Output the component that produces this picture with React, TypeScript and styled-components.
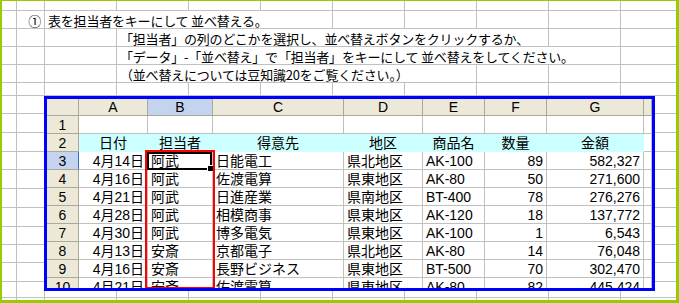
import React from "react";
import styled, { createGlobalStyle } from "styled-components";

const GRID = "#c0c0c0";
const GREEN = "#99cc00";
const HEAD_BG = "#ece9d8";
const HEAD_LINE = "#aca899";
const SEL_BG = "#c5d4ee";

const GlobalStyle = createGlobalStyle`
  html, body { margin: 0; padding: 0; background: #ffffff; }
  body { width: 679px; height: 303px; overflow: hidden; }
`;

const Sheet = styled.div`
  position: relative;
  width: 679px;
  height: 303px;
  box-sizing: border-box;
  border-left: 2px solid ${GREEN};
  border-top: 1px solid ${GREEN};
  border-right: 3px solid ${GREEN};
  border-bottom: 3px solid ${GREEN};
  display: grid;
  grid-template-columns: 15px 28px repeat(8, 72px) 55px;
  grid-template-rows: 10px 18px 18px 18px 18px 13px 18px 19px 19px 18px 19px 19px 19px 18px 18px 19px 16px 2px;
  overflow: hidden;
  background: #fff;
  font-family: "Noto Sans CJK JP", sans-serif;
`;

const SheetCell = styled.div<{ $span: number; $align: string; $lastCol: boolean; $lastRow: boolean }>`
  grid-column: span ${(p) => p.$span};
  box-sizing: border-box;
  border-right: ${(p) => (p.$lastCol ? "none" : `1px solid ${GRID}`)};
  border-bottom: ${(p) => (p.$lastRow ? "none" : `1px solid ${GRID}`)};
  font-size: 13px;
  letter-spacing: -0.2px;
  line-height: 17px;
  white-space: nowrap;
  text-align: ${(p) => p.$align};
  padding: 1px 3px 0 3px;
  color: #000;
  overflow: hidden;
`;

/* the pasted Excel screenshot floats over the sheet grid */
const Picture = styled.div`
  position: absolute;
  left: 42px;
  top: 95px;
  width: 611px;
  height: 195px;
  box-sizing: border-box;
  border: 3px solid #0000ff;
  overflow: hidden;
  display: grid;
  grid-template-columns: 32px 69px 65px 131px 79px 62px 62px 97px 1fr;
  grid-template-rows: 17px repeat(10, 18px);
  background: #fff;
  font-family: "Liberation Sans", "Noto Sans CJK JP", sans-serif;
`;

const ColHead = styled.div<{ $sel: boolean }>`
  box-sizing: border-box;
  background: ${(p) => (p.$sel ? SEL_BG : HEAD_BG)};
  border-right: 1px solid ${HEAD_LINE};
  border-bottom: 1px solid ${HEAD_LINE};
  font-size: 14px;
  line-height: 16px;
  text-align: center;
  color: #000;
`;

const RowHead = styled.div<{ $sel: boolean }>`
  box-sizing: border-box;
  background: ${(p) => (p.$sel ? SEL_BG : HEAD_BG)};
  border-right: 1px solid ${(p) => (p.$sel ? "#316ac5" : HEAD_LINE)};
  border-bottom: 1px solid ${HEAD_LINE};
  font-size: 14px;
  line-height: 17px;
  padding-top: 1px;
  text-align: center;
  color: #000;
`;

const Cell = styled.div<{ $align: string; $fill: boolean }>`
  position: relative;
  box-sizing: border-box;
  background: ${(p) => (p.$fill ? "#ccffff" : "#fff")};
  border-right: 1px solid ${(p) => (p.$fill ? "#ccffff" : GRID)};
  border-bottom: 1px solid ${(p) => (p.$fill ? "#ccffff" : GRID)};
  font-size: 14px;
  line-height: 17px;
  padding: 1px 3px 0 3px;
  text-align: ${(p) => p.$align};
  white-space: nowrap;
  color: #000;
`;

/* red marker drawn over column B, rows 3-10 */
const RedFrame = styled.div`
  position: absolute;
  left: 98px;
  top: 51px;
  width: 70px;
  height: 139px;
  box-sizing: border-box;
  border: 2px solid #ff0000;
  pointer-events: none;
  z-index: 2;
`;

/* active-cell outline, overlays its own cell */
const Selection = styled.div`
  position: absolute;
  inset: 0 0 -1px -1px;
  border: 2px solid #000;
  pointer-events: none;
  z-index: 1;
`;

const FillHandle = styled.div`
  position: absolute;
  right: -3px;
  bottom: -3px;
  width: 5px;
  height: 5px;
  background: #000;
  box-shadow: 0 0 0 1px #fff;
`;

type SCell = { span?: number; text?: string; align?: string };

const outerRows: SCell[][] = (() => {
  const blank = (n: number): SCell[] => Array.from({ length: n }, () => ({}));
  const rows: SCell[][] = [];
  rows.push(blank(11));
  rows.push([{}, { text: "①", align: "right" }, { span: 4, text: "表を担当者をキーにして 並べ替える。" }, ...blank(5)]);
  rows.push([{}, {}, {}, { span: 6, text: "「担当者」の列のどこかを選択し、並べ替えボタンをクリックするか、" }, {}, {}]);
  rows.push([{}, {}, {}, { span: 7, text: "「データ」-「並べ替え」で「担当者」をキーにして 並べ替えをしてください。" }, {}]);
  rows.push([{}, {}, {}, { span: 5, text: "（並べ替えについては豆知識20をご覧ください。）" }, {}, {}, {}]);
  for (let i = 0; i < 13; i++) rows.push(blank(11));
  return rows;
})();

const cols = ["", "A", "B", "C", "D", "E", "F", "G", ""];
const aligns = ["right", "left", "left", "left", "left", "right", "right", "left"];

const data: string[][] = [
  ["", "", "", "", "", "", "", ""],
  ["日付", "担当者", "得意先", "地区", "商品名", "数量", "金額", ""],
  ["4月14日", "阿武", "日能電工", "県北地区", "AK-100", "89", "582,327", ""],
  ["4月16日", "阿武", "佐渡電算", "県東地区", "AK-80", "50", "271,600", ""],
  ["4月21日", "阿武", "日進産業", "県南地区", "BT-400", "78", "276,276", ""],
  ["4月28日", "阿武", "相模商事", "県東地区", "AK-120", "18", "137,772", ""],
  ["4月30日", "阿武", "博多電気", "県東地区", "AK-100", "1", "6,543", ""],
  ["4月13日", "安斎", "京都電子", "県北地区", "AK-80", "14", "76,048", ""],
  ["4月16日", "安斎", "長野ビジネス", "県東地区", "BT-500", "70", "302,470", ""],
  ["4月21日", "安斎", "佐渡電算", "県東地区", "AK-80", "82", "445,424", ""],
];

export default function App() {
  return (
    <>
      <GlobalStyle />
      <Sheet>
        {outerRows.map((row, r) => {
          let col = 0;
          return row.map((c, i) => {
            const span = c.span ?? 1;
            col += span;
            return (
              <SheetCell
                key={`${r}-${i}`}
                $span={span}
                $align={c.align ?? "left"}
                $lastCol={col === 11}
                $lastRow={r === outerRows.length - 1}
              >
                {c.text}
              </SheetCell>
            );
          });
        })}
        <Picture>
          {cols.map((c, i) => (
            <ColHead key={`h${i}`} $sel={c === "B"}>
              {c}
            </ColHead>
          ))}
          {data.map((row, r) => (
            <React.Fragment key={`r${r}`}>
              <RowHead $sel={r === 2}>{r + 1}</RowHead>
              {row.map((v, c) => (
                <Cell
                  key={`c${r}-${c}`}
                  $fill={r === 1 && c < 7}
                  $align={r === 1 ? "center" : aligns[c]}
                >
                  {v}
                  {r === 2 && c === 1 && (
                    <Selection>
                      <FillHandle />
                    </Selection>
                  )}
                </Cell>
              ))}
            </React.Fragment>
          ))}
          <RedFrame />
        </Picture>
      </Sheet>
    </>
  );
}
